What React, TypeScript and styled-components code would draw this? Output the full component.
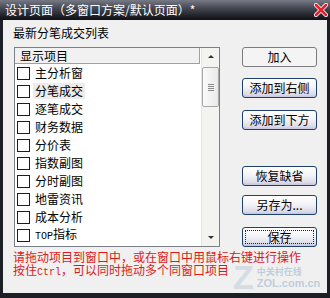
import React from 'react';
import styled, { createGlobalStyle } from 'styled-components';

const GlobalStyle = createGlobalStyle`
  html, body { margin: 0; padding: 0; background: #fff; }
  body { font-family: "Noto Sans CJK SC", "Liberation Sans", sans-serif; }
`;

const Window = styled.div`
  position: relative;
  width: 330px;
  height: 298px;
  box-sizing: border-box;
  padding: 0 3px 5px;
  display: flex;
  flex-direction: column;
  background: #1d1f27;
  overflow: hidden;
`;

const TitleBar = styled.div`
  height: 20px;
  margin: 0 -3px;
  padding: 0 2px 0 5px;
  display: flex;
  align-items: center;
  justify-content: space-between;
  background: linear-gradient(#767a85, #464953 40%, #1b1c22 85%, #111216);
  color: #fff;
  font-size: 12px;
  line-height: 14px;
  white-space: nowrap;
`;

const Body = styled.div`
  flex: 1;
  display: flex;
  flex-direction: column;
  padding: 6px 10px 0 10px;
  background: #f0f0f0;
  font-size: 12px;
  line-height: 14px;
  color: #000;
`;

const Caption = styled.div`
  height: 14px;
`;

const MainRow = styled.div`
  display: flex;
  margin-top: 7px;
`;

const ListBox = styled.div`
  width: 206px;
  height: 200px;
  box-sizing: border-box;
  margin-left: 1px;
  display: flex;
  border: 1px solid #7b7f87;
  background: #fff;
`;

const ListArea = styled.div`
  flex: 1;
  display: flex;
  flex-direction: column;
`;

const Header = styled.div`
  height: 15px;
  margin-right: 1px;
  padding-left: 5px;
  display: flex;
  align-items: center;
  background: #f1f1f1;
  border-bottom: 1px solid #a0a0a0;
  border-right: 1px solid #a0a0a0;
`;

const Row = styled.div`
  height: 18px;
  padding-left: 2px;
  display: flex;
  align-items: center;
`;

const Check = styled.span`
  width: 13px;
  height: 13px;
  box-sizing: border-box;
  border: 1px solid #1c1c1c;
  background: #fff;
  flex: none;
`;

const Label = styled.span<{ $hover?: boolean }>`
  margin-left: 3px;
  padding: 0 2px;
  line-height: 16px;
  background: ${(p) => (p.$hover ? '#ececec' : 'transparent')};
`;

const Ascii = styled.span`
  font-family: "Liberation Mono", monospace;
  font-size: 10px;
`;

const ScrollBar = styled.div`
  width: 17px;
  display: flex;
  flex-direction: column;
  background: #f3f3f0;
  border-left: 1px solid #e6e6e6;
`;

const Arrow = styled.div<{ $down?: boolean }>`
  height: 17px;
  display: flex;
  align-items: center;
  justify-content: center;
  &::after {
    content: '';
    border-left: 3px solid transparent;
    border-right: 3px solid transparent;
    ${(p) => (p.$down ? 'border-top: 3px solid #333;' : 'border-bottom: 3px solid #333;')}
  }
`;

const Thumb = styled.div`
  height: 40px;
  margin: 2px 0 0;
  box-sizing: border-box;
  border: 1px solid #a8a8a8;
  border-radius: 2px;
  background: linear-gradient(90deg, #fafafa, #e9e9e9);
  display: flex;
  flex-direction: column;
  align-items: center;
  justify-content: center;
  gap: 1px;
`;

const Grip = styled.span`
  width: 6px;
  height: 1px;
  background: #8a8a8a;
`;

const Track = styled.div`
  flex: 1;
`;

const ButtonColumn = styled.div`
  width: 75px;
  margin-left: 22px;
  display: flex;
  flex-direction: column;
`;

const Button = styled.div<{ $top: number; $flat?: boolean; $focus?: boolean }>`
  position: relative;
  height: 20px;
  margin-top: ${(p) => p.$top}px;
  box-sizing: border-box;
  display: flex;
  align-items: center;
  justify-content: center;
  border-radius: 3px;
  font-size: 12px;
  border: 1px solid ${(p) => (p.$flat ? '#7c7c7c' : '#1f3f6c')};
  background: ${(p) =>
    p.$flat ? '#f4f4f4' : 'linear-gradient(#ffffff, #f4f4f8 45%, #dcdcea 85%, #c6c4dc)'};
  &::before {
    content: '';
    display: ${(p) => (p.$focus ? 'block' : 'none')};
    position: absolute;
    inset: 2px;
    border: 1px dotted #222;
  }
`;

const Hint = styled.div`
  margin-top: 3px;
  color: #e01818;
  font-size: 12px;
  line-height: 13px;
  white-space: nowrap;
`;

const Watermark = styled.div`
  position: absolute;
  left: 233px;
  top: 262px;
  display: flex;
  align-items: center;
  gap: 3px;
  pointer-events: none;
`;

const WmZ = styled.span`
  font-family: "Liberation Sans", sans-serif;
  font-weight: bold;
  font-size: 34px;
  line-height: 31px;
  color: rgba(185, 200, 218, 0.5);
`;

const WmText = styled.div`
  display: flex;
  flex-direction: column;
  color: rgba(170, 188, 208, 0.7);
  font-weight: bold;
`;

const WmCn = styled.span`
  font-size: 9px;
  line-height: 11px;
`;

const WmEn = styled.span`
  font-family: "Liberation Sans", sans-serif;
  font-size: 11px;
  line-height: 12px;
`;

const items = ['主分析窗', '分笔成交', '逐笔成交', '财务数据', '分价表', '指数副图', '分时副图', '地雷资讯', '成本分析'];

const CloseIcon = () => (
  <svg width="14" height="14" viewBox="0 0 14 14">
    <path d="M2 2 L12 12 M12 2 L2 12" stroke="#fff" strokeWidth="4.2" strokeLinecap="round" />
    <path d="M2 2 L12 12 M12 2 L2 12" stroke="#e8202a" strokeWidth="2.6" strokeLinecap="round" />
  </svg>
);

export default function App() {
  return (
    <>
      <GlobalStyle />
      <Window>
        <TitleBar>
          <span>设计页面（多窗口方案/默认页面）*</span>
          <CloseIcon />
        </TitleBar>
        <Body>
          <Caption>最新分笔成交列表</Caption>
          <MainRow>
            <ListBox>
              <ListArea>
                <Header>显示项目</Header>
                {items.map((t, i) => (
                  <Row key={t}>
                    <Check />
                    <Label $hover={i === 1}>{t}</Label>
                  </Row>
                ))}
                <Row>
                  <Check />
                  <Label>
                    <Ascii>TOP</Ascii>指标
                  </Label>
                </Row>
              </ListArea>
              <ScrollBar>
                <Arrow />
                <Thumb>
                  <Grip />
                  <Grip />
                  <Grip />
                  <Grip />
                </Thumb>
                <Track />
                <Arrow $down />
              </ScrollBar>
            </ListBox>
            <ButtonColumn>
              <Button $top={0} $flat>加入</Button>
              <Button $top={11}>添加到右侧</Button>
              <Button $top={12}>添加到下方</Button>
              <Button $top={36}>恢复缺省</Button>
              <Button $top={9}>另存为...</Button>
              <Button $top={12} $focus>保存</Button>
            </ButtonColumn>
          </MainRow>
          <Hint>
            请拖动项目到窗口中，或在窗口中用鼠标右键进行操作
            <br />
            按住<Ascii>Ctrl</Ascii>，可以同时拖动多个同窗口项目
          </Hint>
        </Body>
        <Watermark>
          <WmZ>Z</WmZ>
          <WmText>
            <WmCn>中关村在线</WmCn>
            <WmEn>ZOL.com.cn</WmEn>
          </WmText>
        </Watermark>
      </Window>
    </>
  );
}
